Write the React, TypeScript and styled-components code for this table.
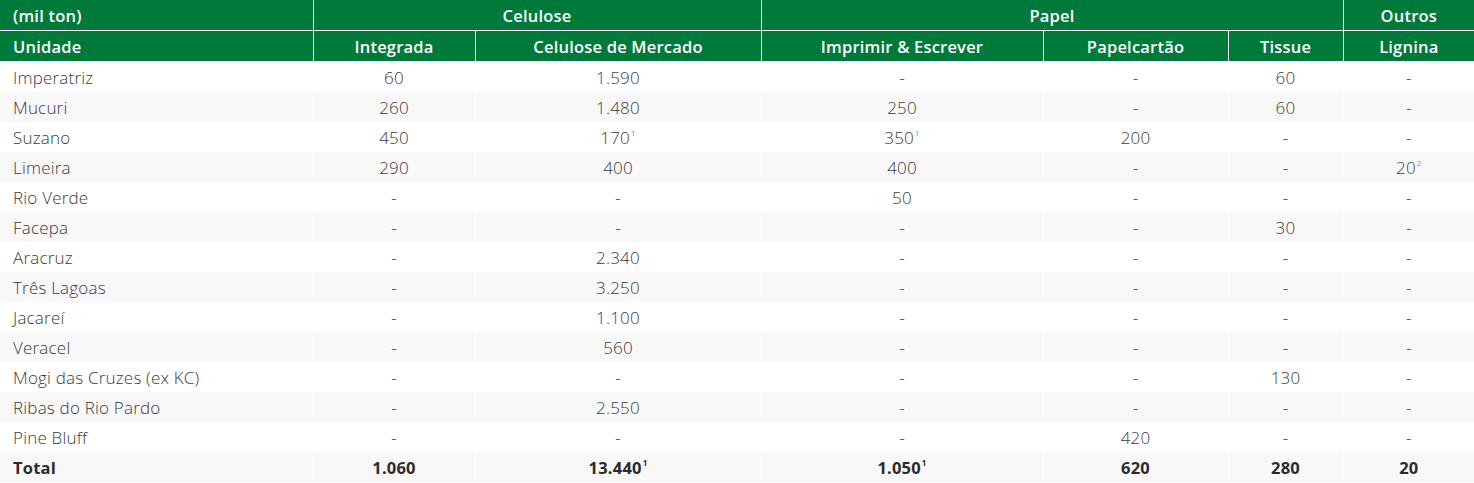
import styled, { createGlobalStyle } from "styled-components";

const GlobalStyle = createGlobalStyle`
  body {
    margin: 0;
    background: #ffffff;
    font-family: "Open Sans", "Lato", sans-serif;
  }
`;

const Table = styled.table`
  width: 1474px;
  table-layout: fixed;
  border-collapse: collapse;
  font-size: 17px;
  color: #3a3a3a;
`;

const HeadCell = styled.th<{ $left?: boolean }>`
  height: 30px;
  padding: 0 13px;
  background: #007a3a;
  color: #ffffff;
  font-weight: 600;
  font-size: 16.5px;
  letter-spacing: 0.2px;
  text-align: ${({ $left }) => ($left ? "left" : "center")};
  border: 1px solid #ffffff;
  border-top: none;
  white-space: nowrap;

  &:first-child {
    border-left: none;
  }
  &:last-child {
    border-right: none;
  }
`;

const Row = styled.tr<{ $striped?: boolean }>`
  background: ${({ $striped }) => ($striped ? "#f8f8f8" : "#ffffff")};
`;

const Cell = styled.td<{ $left?: boolean; $bold?: boolean }>`
  height: 30px;
  padding: 0 13px;
  text-align: ${({ $left }) => ($left ? "left" : "center")};
  font-weight: ${({ $bold }) => ($bold ? 700 : 300)};
  font-size: ${({ $bold }) => ($bold ? "16.5px" : "17px")};
  letter-spacing: 0.2px;
  color: ${({ $bold }) => ($bold ? "#2b2b2b" : "#3a3a3a")};
  border-left: 1px solid #ffffff;
  white-space: nowrap;

  &:first-child {
    border-left: none;
  }
`;

const Note = styled.sup`
  font-size: 8px;
  vertical-align: 8px;
  line-height: 0;
  margin-left: 1px;
`;

type Value = string | [string, string];

const rows: [string, Value[]][] = [
  ["Imperatriz", ["60", "1.590", "-", "-", "60", "-"]],
  ["Mucuri", ["260", "1.480", "250", "-", "60", "-"]],
  ["Suzano", ["450", ["170", "1"], ["350", "1"], "200", "-", "-"]],
  ["Limeira", ["290", "400", "400", "-", "-", ["20", "2"]]],
  ["Rio Verde", ["-", "-", "50", "-", "-", "-"]],
  ["Facepa", ["-", "-", "-", "-", "30", "-"]],
  ["Aracruz", ["-", "2.340", "-", "-", "-", "-"]],
  ["Três Lagoas", ["-", "3.250", "-", "-", "-", "-"]],
  ["Jacareí", ["-", "1.100", "-", "-", "-", "-"]],
  ["Veracel", ["-", "560", "-", "-", "-", "-"]],
  ["Mogi das Cruzes (ex KC)", ["-", "-", "-", "-", "130", "-"]],
  ["Ribas do Rio Pardo", ["-", "2.550", "-", "-", "-", "-"]],
  ["Pine Bluff", ["-", "-", "-", "420", "-", "-"]],
];

const total: Value[] = ["1.060", ["13.440", "1"], ["1.050", "1"], "620", "280", "20"];

const widths = [313, 162, 286, 282, 185, 115, 131];

function renderValue(v: Value) {
  if (typeof v === "string") return v;
  return (
    <>
      {v[0]}
      <Note>{v[1]}</Note>
    </>
  );
}

export default function App() {
  return (
    <>
      <GlobalStyle />
      <Table>
        <colgroup>
          {widths.map((w, i) => (
            <col key={i} style={{ width: w }} />
          ))}
        </colgroup>
        <thead>
          <tr>
            <HeadCell $left>(mil ton)</HeadCell>
            <HeadCell colSpan={2}>Celulose</HeadCell>
            <HeadCell colSpan={3}>Papel</HeadCell>
            <HeadCell>Outros</HeadCell>
          </tr>
          <tr>
            <HeadCell $left>Unidade</HeadCell>
            <HeadCell>Integrada</HeadCell>
            <HeadCell>Celulose de Mercado</HeadCell>
            <HeadCell>Imprimir &amp; Escrever</HeadCell>
            <HeadCell>Papelcartão</HeadCell>
            <HeadCell>Tissue</HeadCell>
            <HeadCell>Lignina</HeadCell>
          </tr>
        </thead>
        <tbody>
          {rows.map(([name, values], i) => (
            <Row key={name} $striped={i % 2 === 1}>
              <Cell $left>{name}</Cell>
              {values.map((v, j) => (
                <Cell key={j}>{renderValue(v)}</Cell>
              ))}
            </Row>
          ))}
          <Row $striped>
            <Cell $left $bold>
              Total
            </Cell>
            {total.map((v, j) => (
              <Cell key={j} $bold>
                {renderValue(v)}
              </Cell>
            ))}
          </Row>
        </tbody>
      </Table>
    </>
  );
}
